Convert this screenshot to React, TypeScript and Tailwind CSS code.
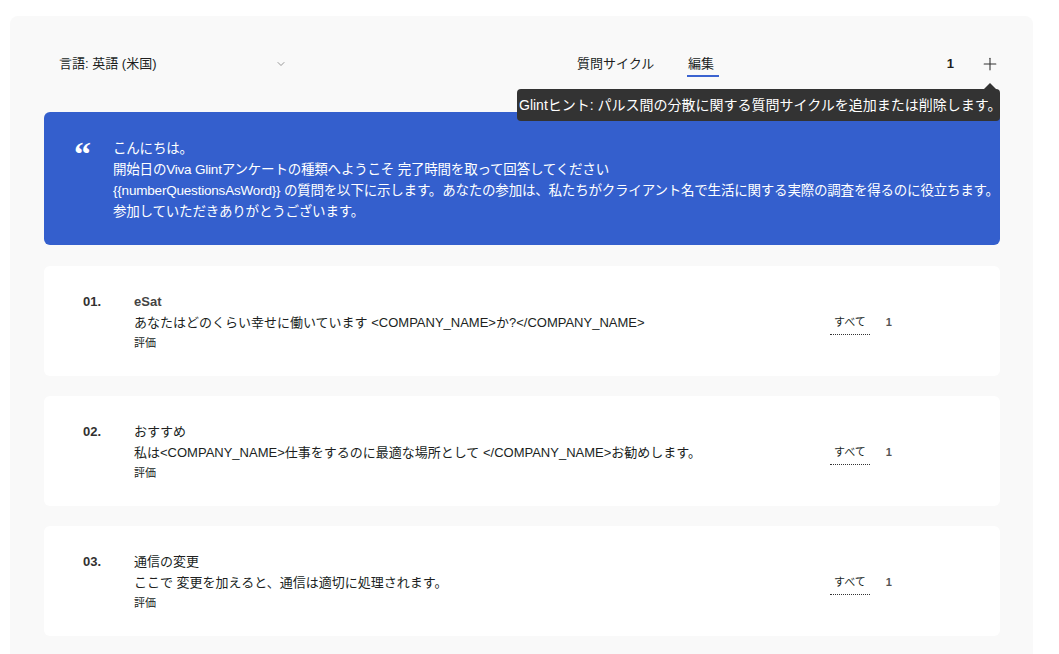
import { ChevronDown, Plus } from 'lucide-react';

const font = { fontFamily: '"Liberation Sans", "Noto Sans CJK JP", sans-serif' };

interface Question {
  num: string;
  title: string;
  bold?: boolean;
  text: string;
}

const questions: Question[] = [
  { num: '01.', title: 'eSat', bold: true, text: 'あなたはどのくらい幸せに働いています <COMPANY_NAME>か?</COMPANY_NAME>' },
  { num: '02.', title: 'おすすめ', text: '私は<COMPANY_NAME>仕事をするのに最適な場所として </COMPANY_NAME>お勧めします。' },
  { num: '03.', title: '通信の変更', text: 'ここで 変更を加えると、通信は適切に処理されます。' },
];

function QuestionCard({ q }: { q: Question }) {
  return (
    <div className="h-[110px] bg-white rounded-md flex pl-[39px] pt-[26px] text-[#201f1e]">
      <div className="w-[51px] shrink-0 text-[13px] font-bold text-[#323130]">{q.num}</div>
      <div className="flex-1 flex flex-col">
        <div className={`text-[13px] leading-[20px] ${q.bold ? 'font-bold text-[#444]' : ''}`}>{q.title}</div>
        <div className="text-[13px] leading-[22px]">{q.text}</div>
        <div className="text-[11px] leading-[18px]">評価</div>
      </div>
      <div className="w-[170px] shrink-0 flex items-start pt-[22px] text-[11px]">
        <span className="border-b border-dotted border-[#333] pb-[3px] px-[4px]">すべて</span>
        <span className="ml-[16px] font-bold text-[#555]">1</span>
      </div>
    </div>
  );
}

export default function App() {
  return (
    <div className="min-h-screen bg-white pl-[10px] pr-[26px] pt-[16px]" style={font}>
      <div className="bg-[#f9f9f9] rounded-t-lg min-h-[638px] pl-[34px] pr-[33px]">
        <div className="h-[96px] flex items-center text-[13px] text-[#201f1e] relative">
          <div className="flex items-center pl-[15px] w-[533px] shrink-0">
            <span>言語: 英語 (米国)</span>
            <ChevronDown className="ml-[118px] w-[12px] h-[12px] text-[#777]" strokeWidth={1.5} />
          </div>
          <div className="w-[111px] shrink-0">質問サイクル</div>
          <div className="relative">
            <span>編集</span>
            <div className="absolute left-[-1px] right-[-5px] top-[21px] h-[2px] bg-[#3b63d0]" />
          </div>
          <div className="ml-auto flex items-center gap-[26px]">
            <span className="font-bold">1</span>
            <Plus className="w-[20px] h-[20px] text-[#333]" strokeWidth={1.3} />
          </div>
          <div className="absolute right-0 top-[73px] h-[32px] w-[483px] bg-[#333] rounded-[4px] text-white text-[14px] flex items-center pl-[2px] z-10 whitespace-nowrap">
            Glintヒント: パルス間の分散に関する質問サイクルを追加または削除します。
            <div className="absolute right-[4px] top-[-6px] w-0 h-0 border-l-[6px] border-r-[6px] border-b-[6px] border-l-transparent border-r-transparent border-b-[#333]" />
          </div>
        </div>
        <div className="h-[133px] bg-[#345fcd] rounded-[6px] flex pt-[26px] pl-[30px] text-white">
          <div className="w-[39px] shrink-0 text-[34px] font-bold leading-[20px] pt-[6px]" style={{ fontFamily: 'Georgia, "Liberation Serif", serif' }}>“</div>
          <div className="text-[13.5px] tracking-[-0.2px] leading-[21px] whitespace-nowrap">
            <div>こんにちは。</div>
            <div>開始日のViva Glintアンケートの種類へようこそ 完了時間を取って回答してください</div>
            <div>{'{{numberQuestionsAsWord}}'} の質問を以下に示します。あなたの参加は、私たちがクライアント名で生活に関する実際の調査を得るのに役立ちます。</div>
            <div>参加していただきありがとうございます。</div>
          </div>
        </div>
        <div className="flex flex-col gap-[20px] pt-[21px]">
          {questions.map((q) => (
            <QuestionCard key={q.num} q={q} />
          ))}
        </div>
      </div>
    </div>
  );
}
